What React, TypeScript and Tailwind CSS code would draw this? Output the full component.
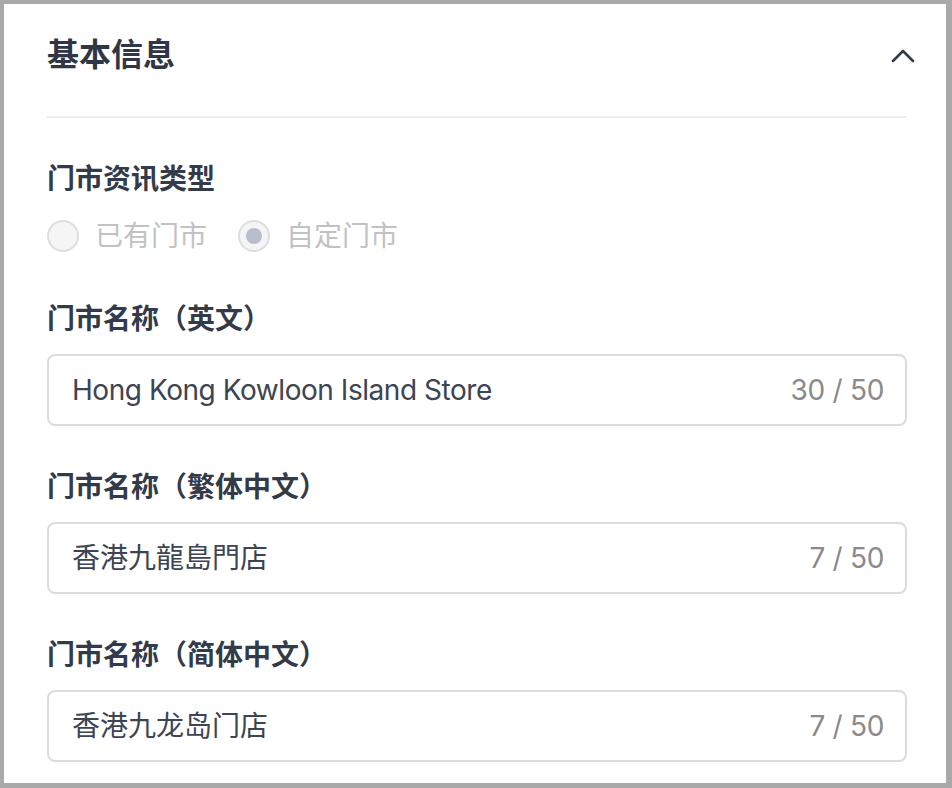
import React from 'react';

const font = { fontFamily: 'Inter, "Noto Sans CJK SC", sans-serif' };

const fields = [
  { label: '门市名称（英文）', value: 'Hong Kong Kowloon Island Store', count: '30 / 50', latin: true },
  { label: '门市名称（繁体中文）', value: '香港九龍島門店', count: '7 / 50', latin: false },
  { label: '门市名称（简体中文）', value: '香港九龙岛门店', count: '7 / 50', latin: false },
];

const Radio: React.FC<{ label: string; checked?: boolean }> = ({ label, checked }) => (
  <label className="flex items-center gap-4">
    <span className="w-8 h-8 rounded-full border-2 border-[#dedede] bg-[#f5f5f5] flex items-center justify-center">
      {checked && <span className="w-4 h-4 rounded-full bg-[#b9bece]" />}
    </span>
    <span className="text-[28px] leading-8 text-[#c2c2c2]">{label}</span>
  </label>
);

const App: React.FC = () => {
  return (
    <div className="w-[952px] h-[788px] bg-[#a9a9a9] pt-1 pl-1 pr-[6px] pb-[5px]" style={font}>
      <div className="h-full bg-white pl-[43px] pr-[39px] pt-[31px] overflow-hidden">
        {/* section header */}
        <div className="flex items-center justify-between">
          <h2 className="text-[32px] leading-[40px] font-semibold text-[#2f3645]">基本信息</h2>
          <svg width="24" height="14" viewBox="0 0 24 14" fill="none" className="mr-[-8px] mb-[-2px]">
            <polyline
              points="2,12 12,2 22,12"
              stroke="#343b4a"
              strokeWidth="2.6"
              strokeLinecap="round"
              strokeLinejoin="round"
            />
          </svg>
        </div>
        <div className="h-[2px] bg-[#eeeeee] mt-[41px]" />

        {/* store type */}
        <p className="mt-[41px] text-[28px] leading-[40px] font-semibold text-[#333a48]">门市资讯类型</p>
        <div className="mt-[21px] flex items-center gap-[31px]">
          <Radio label="已有门市" />
          <Radio label="自定门市" checked />
        </div>

        {/* name fields */}
        <div className="mt-[47px] flex flex-col gap-[41px]">
          {fields.map((f) => (
            <div key={f.label}>
              <p className="text-[28px] leading-[40px] font-semibold text-[#333a48]">{f.label}</p>
              <div className="mt-[15px] h-[72px] rounded-lg border-2 border-[#dcdcdc] flex items-center justify-between pl-[23px] pr-[21px]">
                <span className={f.latin ? 'text-[28px] tracking-[-0.45px] text-[#3d4452]' : 'text-[28px] text-[#3d4452]'}>
                  {f.value}
                </span>
                <span className="text-[28px] tracking-[-0.3px] text-[#8a8a8a]">{f.count}</span>
              </div>
            </div>
          ))}
        </div>
      </div>
    </div>
  );
};

export default App;
